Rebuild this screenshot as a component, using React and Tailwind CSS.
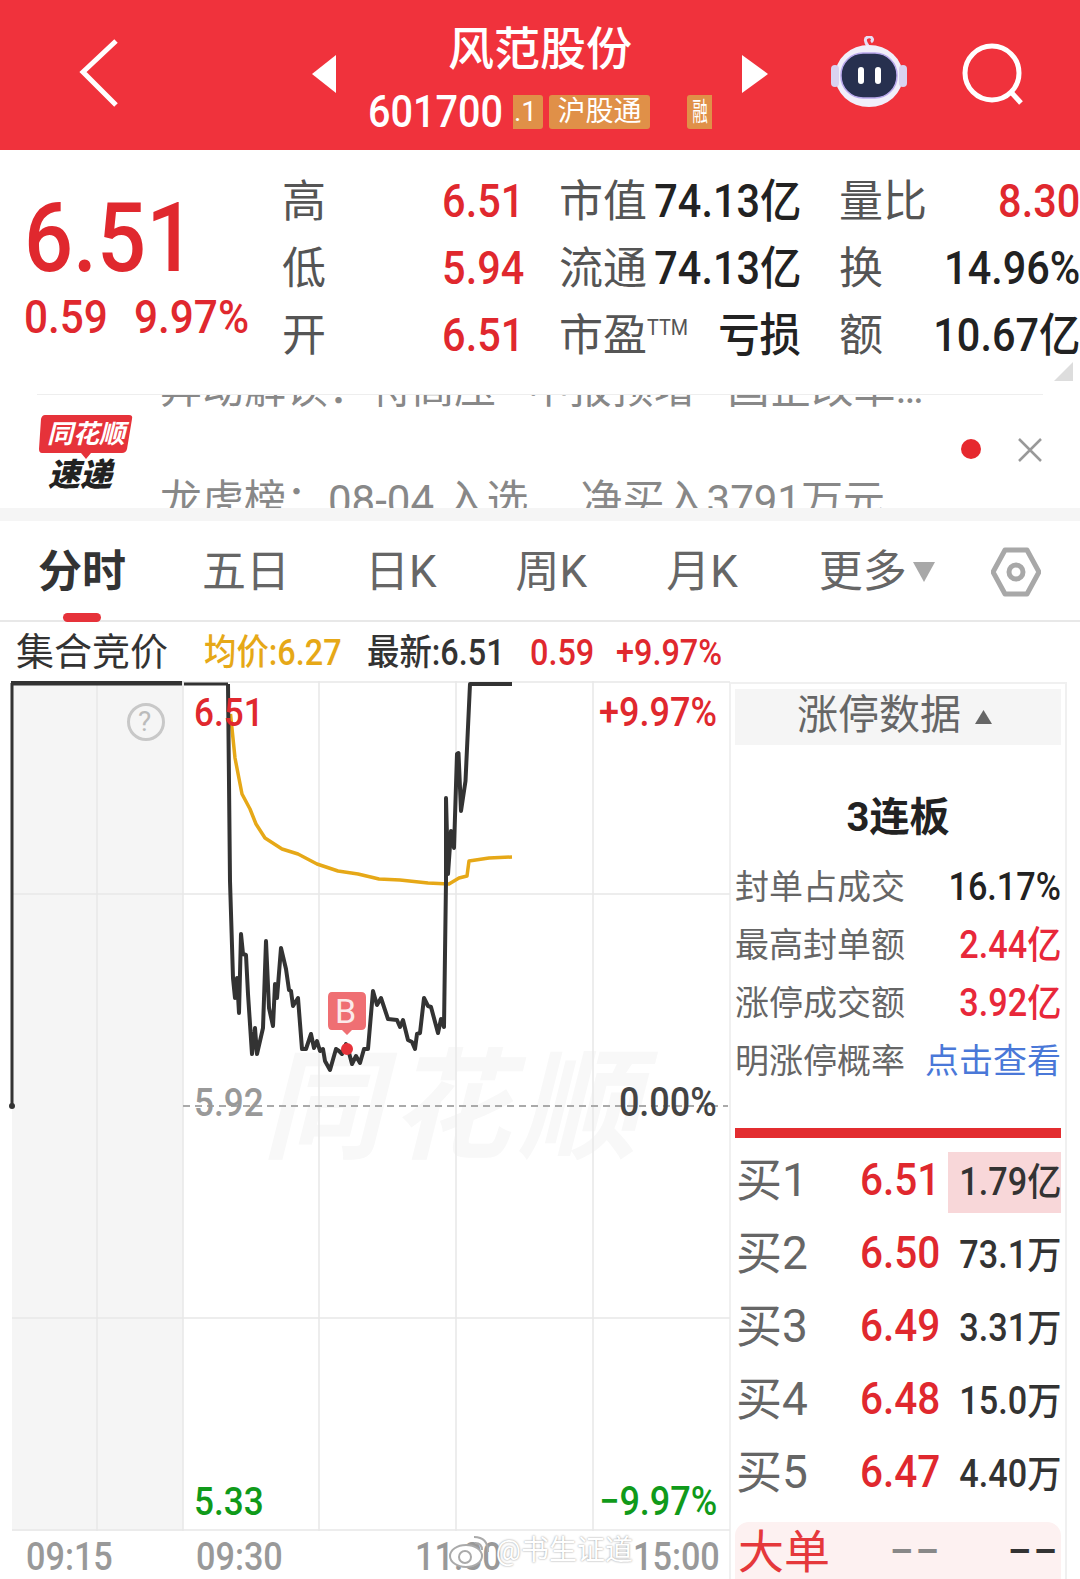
import React from 'react';

const RED = 'text-[#e0282e]';

// 数字字体在原图里偏窄，这里统一横向压缩
function Narrow({ children, className = '', left = false }) {
  return (
    <span className={`inline-block font-medium whitespace-nowrap scale-x-[0.9] ${left ? 'origin-left' : 'origin-right'} ${className}`}>
      {children}
    </span>
  );
}

function Header() {
  return (
    <div className="flex h-[150px] bg-[#f0323c] text-white">
      <svg className="mt-[38px] ml-[78px] h-[70px] w-[42px]" viewBox="0 0 42 70" fill="none" stroke="#fff" strokeWidth="5">
        <path d="M38 3 L5 34 L38 67" />
      </svg>
      <svg className="mt-[55px] ml-[192px] h-[38px] w-[24px]" viewBox="0 0 24 38" fill="#fff">
        <path d="M24 0 V38 L0 19 Z" />
      </svg>
      <div className="ml-[32px] w-[372px]">
        <div className="w-[344px] pt-[20px] text-center text-[46px] leading-[58px] font-medium">风范股份</div>
        <div className="mt-[17px] flex h-[34px] items-center">
          <Narrow left className="w-[145px] text-[44px] leading-[34px]">601700</Narrow>
          <span className="flex h-[34px] w-[30px] items-center justify-end rounded-r-[3px] bg-[#e09048] pr-[6px] text-[28px]">.1</span>
          <span className="ml-[6px] flex h-[34px] w-[101px] items-center justify-center rounded-[3px] bg-[#e09048] text-[28px]">沪股通</span>
          <span className="ml-[37px] flex h-[34px] w-[25px] items-center justify-center overflow-hidden rounded-l-[3px] bg-[#e09048] text-[26px]">
            <span className="inline-block scale-x-[0.6]">融</span>
          </span>
        </div>
      </div>
      <svg className="mt-[55px] ml-[2px] h-[38px] w-[26px]" viewBox="0 0 26 38" fill="#fff">
        <path d="M0 0 V38 L26 19 Z" />
      </svg>
      <svg className="mt-[36px] ml-[62px] h-[72px] w-[78px]" viewBox="0 0 78 72">
        <path d="M38 10 C35 6 34 2 38 1 C42 0 44 4 41 6" fill="none" stroke="#e6def5" strokeWidth="3" />
        <ellipse cx="39" cy="40" rx="34" ry="31" fill="#f1effa" />
        <rect x="1" y="29" width="8" height="22" rx="4" fill="#d9d2f0" />
        <rect x="69" y="29" width="8" height="22" rx="4" fill="#d9d2f0" />
        <rect x="11" y="17" width="56" height="45" rx="22" fill="#27304f" stroke="#b9a8ec" strokeWidth="1.5" />
        <rect x="28" y="31" width="6" height="17" rx="3" fill="#fff" />
        <rect x="45" y="31" width="6" height="17" rx="3" fill="#fff" />
      </svg>
      <svg className="mt-[43px] ml-[53px] h-[64px] w-[66px]" viewBox="0 0 66 64" fill="none" stroke="#fff" strokeWidth="5">
        <circle cx="31" cy="30" r="27" />
        <path d="M50 49 L60 60" />
      </svg>
    </div>
  );
}

function QuoteRow({ label, value, mid, midValue, side, sideValue, sup }) {
  return (
    <div className="flex h-[67px] items-center">
      <span className="w-[42px] shrink-0 text-[44px] text-[#555]">{label}</span>
      <span className={`flex w-[200px] shrink-0 justify-end text-[46px] ${RED}`}><Narrow>{value}</Narrow></span>
      <span className="ml-[35px] shrink-0 text-[44px] whitespace-nowrap text-[#555]">{mid}{sup && <Narrow left className="w-[50px] align-super text-[22px] font-normal">{sup}</Narrow>}</span>
      <span className="flex min-w-0 flex-1 justify-end text-[46px] text-[#222]"><Narrow>{midValue}</Narrow></span>
      <span className="ml-[38px] w-[92px] shrink-0 text-[44px] whitespace-nowrap text-[#555]">{side}</span>
      <span className={`flex w-[149px] shrink-0 justify-end text-[46px] ${side === '量比' ? RED : 'text-[#222]'}`}><Narrow>{sideValue}</Narrow></span>
    </div>
  );
}

function Quote() {
  return (
    <div className="relative flex h-[244px] pt-[18px]">
      <div className="w-[282px] pl-[24px]">
        <div className={`pt-[24px] text-[96px] leading-[92px] ${RED}`}><Narrow left>6.51</Narrow></div>
        <div className={`mt-[8px] flex text-[47px] leading-[50px] ${RED}`}>
          <Narrow left className="w-[110px]">0.59</Narrow>
          <Narrow left>9.97%</Narrow>
        </div>
      </div>
      <div className="w-[798px]">
        <QuoteRow label="高" value="6.51" mid="市值" midValue="74.13亿" side="量比" sideValue="8.30" />
        <QuoteRow label="低" value="5.94" mid="流通" midValue="74.13亿" side="换" sideValue="14.96%" />
        <QuoteRow label="开" value="6.51" mid="市盈" sup="TTM" midValue="亏损" side="额" sideValue="10.67亿" />
      </div>
      <div className="absolute right-[7px] bottom-[13px] h-0 w-0 border-b-[19px] border-l-[19px] border-b-[#dddddd] border-l-transparent" />
    </div>
  );
}

function News() {
  return (
    <div className="flex h-[113px] bg-white">
      <div className="ml-[38px] w-[122px] pt-[20px]">
        <svg className="ml-[1px] h-[48px] w-[94px]" viewBox="0 0 94 48">
          <path d="M6 0 H90 Q94 0 93 4 L88 34 Q87 38 83 38 H52 L47 44 L42 38 H3 Q0 38 0 34 L2 4 Q3 0 6 0 Z" fill="#e6323a" />
        </svg>
        <div className="mt-[-48px] ml-[9px] text-[26px] leading-[38px] font-bold text-white italic">同花顺</div>
        <div className="mt-[3px] ml-[10px] text-[32px] leading-[38px] font-black text-[#222] italic">速递</div>
      </div>
      <div className="relative h-[113px] w-[800px] overflow-hidden text-[42px] whitespace-nowrap text-[#888]">
        <div className="mt-[-31px] h-[112px] leading-[50px]">异动解读：特高压 ·&nbsp;中报预增 ·&nbsp;国企改革…</div>
        <div className="leading-[50px]">龙虎榜：08-04 入选 &nbsp; &nbsp; 净买入3791万元</div>
      </div>
      <div className="mt-[44px] ml-[1px] h-[20px] w-[20px] rounded-full bg-[#e6282e]" />
      <svg className="mt-[42px] ml-[36px] h-[26px] w-[26px]" viewBox="0 0 26 26" stroke="#999" strokeWidth="2.5">
        <path d="M2 2 L24 24 M24 2 L2 24" />
      </svg>
    </div>
  );
}

function Tabs() {
  const tabs = [
    ['五日', 'ml-[76px]'],
    ['日K', 'ml-[75px]'],
    ['周K', 'ml-[79px]'],
    ['月K', 'ml-[79px]'],
    ['更多', 'ml-[81px]'],
  ];
  return (
    <div className="relative flex h-[101px] items-center border-b-2 border-[#e8e8e8] pt-[3px] pl-[38px]">
      <span className="text-[44px] font-bold text-[#333]">分时</span>
      {tabs.map(([name, gap]) => (
        <span key={name} className={`${gap} text-[44px] text-[#666]`}>{name}</span>
      ))}
      <svg className="ml-[6px] h-[20px] w-[22px]" viewBox="0 0 22 20" fill="#a8a8a8">
        <path d="M0 0 H22 L11 20 Z" />
      </svg>
      <svg className="ml-[56px] h-[50px] w-[50px]" viewBox="0 0 50 50" fill="none" stroke="#a8a8a8" strokeWidth="5">
        <path d="M14 3 H36 L48 25 L36 47 H14 L2 25 Z" strokeLinejoin="round" />
        <circle cx="25" cy="25" r="7" />
      </svg>
      <div className="absolute bottom-[-2px] left-[63px] h-[9px] w-[38px] rounded-full bg-[#e6323a]" />
    </div>
  );
}

function SubRow() {
  return (
    <div className="flex h-[59px] items-center pt-[2px] pl-[16px] whitespace-nowrap">
      <span className="w-[188px] text-[38px] text-[#333]">集合竞价</span>
      <Narrow left className="w-[163px] text-[36px] text-[#e6a817]">均价:6.27</Narrow>
      <Narrow left className="w-[163px] text-[36px] text-[#333]">最新:6.51</Narrow>
      <Narrow left className={`w-[86px] text-[36px] ${RED}`}>0.59</Narrow>
      <Narrow left className={`text-[36px] ${RED}`}>+9.97%</Narrow>
    </div>
  );
}

const PRICE =
  '228,683 230,880 233,977 235,997 237,977 239,1012 241,933 243,953 246,954 248,993 252,1053 255,1027 257,1053 263,1027 266,940 269,1007 273,1025 275,983 277,997 281,947 286,968 289,989 291,990 293,1005 298,997 302,1048 306,1048 311,1033 314,1047 317,1040 320,1050 323,1048 325,1060 330,1069 336,1048 339,1050 342,1053 346,1043 348,1048 352,1063 356,1055 360,1062 364,1048 368,1048 373,990 377,1004 381,997 388,1018 397,1019 400,1026 403,1019 408,1039 412,1041 415,1048 417,1033 420,1032 424,997 428,1005 431,1006 438,1032 441,1018 444,1026 446,880 446,797 448,873 451,830 454,847 457,753 458.5,752 461,810 465.5,780 470,683 512,683';
const AVG =
  '230.5,713 235,757 242,793 250,808 256,823 265,837 282,848 298,853 317,863 338,870 358,873 379,878 400,879 428,882 449,883 459,877 467,875 469,860 489,857 512,856';

function Chart() {
  return (
    <div className="relative h-[899px] w-[730px] shrink-0">
      <div className="absolute top-[362px] left-[262px] text-[120px] leading-[130px] font-bold tracking-[8px] text-[#f8f8f8] italic">同花顺</div>
      <svg className="relative h-[850px] w-[730px]" viewBox="0 680 730 850" fill="none">
        <rect x="12" y="680" width="171" height="850" fill="#f5f5f5" />
        <g stroke="#e8e8e8" strokeWidth="1.5">
          <path d="M12 893 H730 M12 1317 H730 M12 1529 H730 M12 681 H730" />
          <path d="M97 680 V1530 M183 680 V1530 M319 680 V1530 M456 680 V1530 M593 680 V1530" />
        </g>
        <path d="M183 1105 H728" stroke="#aaa" strokeWidth="2" strokeDasharray="7 5" />
        <path d="M12 1105 V682" stroke="#333" strokeWidth="3" />
        <circle cx="12" cy="1105" r="3" fill="#333" />
        <path d="M11 682 H182" stroke="#333" strokeWidth="5" />
        <path d="M184 683 H228" stroke="#333" strokeWidth="3" />
        <polyline points={AVG} stroke="#e6a817" strokeWidth="3.5" strokeLinejoin="round" />
        <polyline points={PRICE} stroke="#333" strokeWidth="4" strokeLinejoin="round" />
        <circle cx="347" cy="1048" r="6" fill="#e6323a" />
        <path d="M332 991 H361 Q366 991 366 996 V1024 Q366 1029 361 1029 H352 L347 1034 L342 1029 H332 Q328 1029 328 1024 V996 Q328 991 332 991 Z" fill="#ef6f73" />
        <circle cx="146" cy="721" r="17.5" stroke="#c8c8c8" strokeWidth="3" />
      </svg>
      <span className="absolute top-[310px] left-[335px] text-[34px] leading-[40px] text-[#fbeaea]">B</span>
      <span className="absolute top-[26px] left-[138px] text-[28px] leading-[30px] text-[#bbb]">?</span>
      <div className="absolute top-[9px] left-[194px] text-[39px] leading-[46px] text-[#e0282e]"><Narrow left>6.51</Narrow></div>
      <div className="absolute top-[9px] right-[13px] text-[40px] leading-[46px] text-[#e0282e]"><Narrow>+9.97%</Narrow></div>
      <div className="absolute top-[399px] left-[194px] text-[39px] leading-[46px] text-[#999]"><Narrow left>5.92</Narrow></div>
      <div className="absolute top-[399px] right-[13px] text-[40px] leading-[46px] text-[#444]"><Narrow>0.00%</Narrow></div>
      <div className="absolute top-[798px] left-[194px] text-[39px] leading-[46px] text-[#109a1a]"><Narrow left>5.33</Narrow></div>
      <div className="absolute top-[798px] right-[13px] text-[40px] leading-[46px] text-[#109a1a]"><Narrow>−9.97%</Narrow></div>
      <div className="flex h-[49px] items-center pt-[4px] pl-[26px] text-[38px] text-[#999]">
        <Narrow left className="w-[170px]">09:15</Narrow>
        <Narrow left className="w-[219px]">09:30</Narrow>
        <Narrow left className="w-[218px]">11:30</Narrow>
        <Narrow left>15:00</Narrow>
      </div>
      <div className="absolute right-[97px] bottom-[8px] flex items-center text-[28px] text-white [text-shadow:0_0_2px_#888]">
        <svg className="mr-[4px] h-[34px] w-[44px]" viewBox="0 0 44 34" fill="#ffffff" stroke="#aaa" strokeWidth="2">
          <ellipse cx="18" cy="22" rx="16" ry="11" />
          <circle cx="17" cy="23" r="6" />
          <path d="M26 3 Q40 3 40 18 M27 9 Q34 9 34 16" fill="none" />
        </svg>
        @书生证道
      </div>
    </div>
  );
}

function LimitRow({ label, value, color }) {
  return (
    <div className="flex h-[58px] items-center justify-between">
      <span className="text-[34px] text-[#666]">{label}</span>
      {color === 'blue' ? (
        <span className="text-[34px] text-[#4a78d8]">{value}</span>
      ) : (
        <Narrow className={`text-[38px] ${color}`}>{value}</Narrow>
      )}
    </div>
  );
}

function OrderRow({ label, price, vol, hot }) {
  return (
    <div className="relative flex h-[73px] items-center pl-[1px]">
      <span className="mt-[-5px] w-[127px] text-[46px] whitespace-nowrap text-[#666]">买{label}</span>
      <span className={`mt-[-5px] flex w-[88px] justify-end text-[45px] ${RED}`}><Narrow>{price}</Narrow></span>
      <span className={`ml-[7px] flex h-[61px] flex-1 items-center justify-end text-[38px] text-[#333] ${hot ? 'bg-[#f8d7d9]' : ''}`}>
        <Narrow>{vol}</Narrow>
      </span>
    </div>
  );
}

function SidePanel() {
  return (
    <div className="mt-[1px] ml-[-1px] h-[898px] w-[338px] border-x-2 border-t-2 border-[#f0f0f0] px-[4px] pt-[5px]">
      <div className="flex h-[56px] items-center justify-center bg-[#f5f5f5] pr-[7px] text-[41px] text-[#666]">
        <span className="mt-[-3px]">涨停数据</span>
        <svg className="ml-[14px] h-[14px] w-[17px]" viewBox="0 0 17 14" fill="#666"><path d="M8.5 0 L17 14 H0 Z" /></svg>
      </div>
      <div className="mt-[48px] text-center text-[40px] leading-[50px] font-bold text-[#222]">3连板</div>
      <div className="mt-[15px]">
        <LimitRow label="封单占成交" value="16.17%" color="text-[#222]" />
        <LimitRow label="最高封单额" value="2.44亿" color="text-[#e8283a]" />
        <LimitRow label="涨停成交额" value="3.92亿" color="text-[#e8283a]" />
        <LimitRow label="明涨停概率" value="点击查看" color="blue" />
      </div>
      <div className="mt-[38px] h-[10px] bg-[#e32d30]" />
      <div className="mt-[8px]">
        <OrderRow label="1" price="6.51" vol="1.79亿" hot />
        <OrderRow label="2" price="6.50" vol="73.1万" />
        <OrderRow label="3" price="6.49" vol="3.31万" />
        <OrderRow label="4" price="6.48" vol="15.0万" />
        <OrderRow label="5" price="6.47" vol="4.40万" />
      </div>
      <div className="mt-[11px] flex h-[60px] items-center rounded-t-[14px] bg-[#fdf1f1] pl-[3px]">
        <span className="text-[46px] text-[#e5383b]">大单</span>
        <span className="ml-[60px] w-[50px] text-[36px] font-bold tracking-[3px] text-[#888]">––</span>
        <span className="ml-[68px] text-[36px] font-bold tracking-[3px] text-[#333]">––</span>
      </div>
    </div>
  );
}

export default function App() {
  return (
    <div className="h-[1579px] w-[1080px] overflow-hidden bg-white font-[Roboto,'Noto_Sans_CJK_SC',sans-serif]">
      <Header />
      <Quote />
      <div className="mx-[37px] h-[1px] bg-[#eeeeee]" />
      <News />
      <div className="h-[13px] bg-[#f5f5f5]" />
      <Tabs />
      <SubRow />
      <div className="flex">
        <Chart />
        <SidePanel />
      </div>
    </div>
  );
}
